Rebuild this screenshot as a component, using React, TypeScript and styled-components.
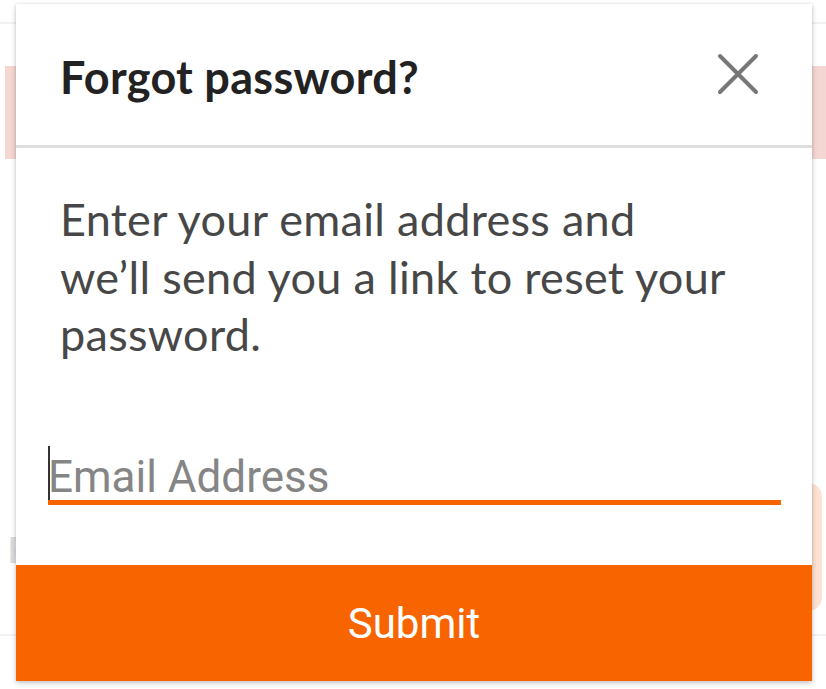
import React from "react";
import styled, { createGlobalStyle } from "styled-components";

const Global = createGlobalStyle`
  html, body { margin: 0; padding: 0; background: #fff; }
  body { width: 826px; height: 689px; overflow: hidden; font-family: "Lato", "Liberation Sans", sans-serif; }
  * { box-sizing: border-box; }
`;

const Page = styled.div`
  position: relative;
  width: 826px;
  height: 689px;
  overflow: hidden;
  display: flex;
  flex-direction: column;
`;

const TopBar = styled.div`
  height: 24px;
  border-bottom: 2px solid #f1f1f1;
`;

const Banner = styled.div`
  margin: 42px 0 0 5px;
  height: 93px;
  background: #f4d6d3;
`;

const LowerRow = styled.div`
  margin-top: 324px;
  height: 128px;
  display: flex;
  justify-content: space-between;
  align-items: flex-start;
`;

const GhostLetter = styled.span`
  margin: 50px 0 0 8px;
  font-family: "Liberation Sans", sans-serif;
  font-weight: 700;
  font-size: 36px;
  line-height: 36px;
  color: #dcdcdc;
`;

const PeachCard = styled.div`
  width: 60px;
  height: 128px;
  margin-right: 4px;
  border-radius: 14px;
  background: #fde1d2;
`;

const FooterLine = styled.div`
  margin-top: 23px;
  border-top: 2px solid #f2f2f2;
`;

const Modal = styled.div`
  position: absolute;
  left: 16px;
  top: 4px;
  width: 796px;
  height: 677px;
  background: #fff;
  box-shadow: 0 2px 5px rgba(0, 0, 0, 0.22), 0 0 3px rgba(0, 0, 0, 0.08);
  display: flex;
  flex-direction: column;
`;

const Header = styled.div`
  height: 144px;
  flex: none;
  padding: 0 52px 0 44px;
  display: flex;
  align-items: center;
  justify-content: space-between;
  border-bottom: 3px solid #dedede;
`;

const Title = styled.h1`
  margin: 5px 0 0;
  font-family: "Lato", "Liberation Sans", sans-serif;
  font-weight: 700;
  font-size: 45px;
  line-height: 1.2;
  color: #222;
  letter-spacing: 0.3px;
`;

const CloseButton = styled.button`
  width: 44px;
  height: 44px;
  padding: 0;
  border: 0;
  background: transparent;
  display: flex;
  align-items: center;
  justify-content: center;
  margin-top: -2px;
`;

const Body = styled.div`
  flex: 1;
  display: flex;
  flex-direction: column;
`;

const Message = styled.p`
  margin: 43px 0 0 44px;
  max-width: 672px;
  font-family: "Lato", "Liberation Sans", sans-serif;
  font-size: 45px;
  line-height: 57.5px;
  color: #474747;
  letter-spacing: 0.3px;
`;

const Field = styled.label`
  position: relative;
  display: block;
  margin: 82px 31px 0 32px;
  border-bottom: 5px solid #f76400;
`;

const Caret = styled.span`
  position: absolute;
  left: 0;
  top: 0;
  width: 2px;
  height: 54px;
  background: #333;
`;

const Input = styled.input`
  display: block;
  width: 100%;
  height: 54px;
  border: 0;
  outline: none;
  padding: 8px 0 0 0;
  font-family: Roboto, "Liberation Sans", sans-serif;
  font-size: 44px;
  color: #333;
  background: transparent;
  caret-color: transparent;
  &::placeholder { color: #858585; }
`;

const Submit = styled.button`
  margin-top: auto;
  height: 116px;
  flex: none;
  border: 0;
  background: #f76400;
  color: #fff;
  font-family: Roboto, "Liberation Sans", sans-serif;
  font-size: 42px;
  padding: 0;
`;

const CloseIcon = () => (
  <svg width="44" height="44" viewBox="0 0 44 44">
    <path d="M4 4 L40 40 M40 4 L4 40" stroke="#777" strokeWidth="4" strokeLinecap="round" fill="none" />
  </svg>
);

export default function App() {
  return (
    <Page>
      <Global />
      <TopBar />
      <Banner />
      <LowerRow>
        <GhostLetter>F</GhostLetter>
        <PeachCard />
      </LowerRow>
      <FooterLine />
      <Modal>
        <Header>
          <Title>Forgot password?</Title>
          <CloseButton aria-label="Close">
            <CloseIcon />
          </CloseButton>
        </Header>
        <Body>
          <Message>
            Enter your email address and we’ll send you a link to reset your password.
          </Message>
          <Field>
            <Caret />
            <Input placeholder="Email Address" />
          </Field>
          <Submit>Submit</Submit>
        </Body>
      </Modal>
    </Page>
  );
}
